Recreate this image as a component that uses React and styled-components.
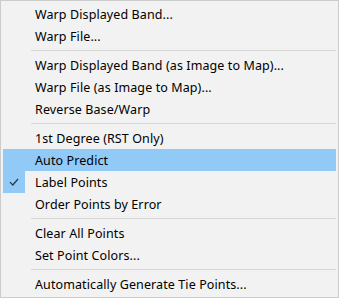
import React from "react";
import styled, { createGlobalStyle } from "styled-components";

const GlobalStyle = createGlobalStyle`
  html, body {
    margin: 0;
    padding: 0;
    background: #ffffff;
  }
  body {
    font-family: "Noto Sans", "Open Sans", sans-serif;
  }
`;

const items = [
  { label: "Warp Displayed Band..." },
  { label: "Warp File..." },
  { sep: true },
  { label: "Warp Displayed Band (as Image to Map)..." },
  { label: "Warp File (as Image to Map)..." },
  { label: "Reverse Base/Warp" },
  { sep: true },
  { label: "1st Degree (RST Only)" },
  { label: "Auto Predict", active: true },
  { label: "Label Points", checked: true },
  { label: "Order Points by Error" },
  { sep: true },
  { label: "Clear All Points" },
  { label: "Set Point Colors..." },
  { sep: true },
  { label: "Automatically Generate Tie Points..." },
];

const Check = () => (
  <svg width="10" height="8" viewBox="0 0 10 8">
    <path d="M1 4.2 L3.8 7 L9 1" fill="none" stroke="#333" strokeWidth="1.2" />
  </svg>
);

const App = () => (
  <>
    <GlobalStyle />
    <Menu>
      {items.map((it, i) =>
        it.sep ? (
          <Separator key={i} />
        ) : (
          <Item key={i} $active={it.active}>
            <Gutter $checked={it.checked}>{it.checked && <Check />}</Gutter>
            <Label>{it.label}</Label>
          </Item>
        )
      )}
    </Menu>
  </>
);

const Menu = styled.div`
  box-sizing: border-box;
  width: 339px;
  height: 298px;
  border: 1px solid #cccccc;
  background: #f2f2f2;
  padding: 2px;
  display: flex;
  flex-direction: column;
`;

const Item = styled.div`
  display: flex;
  align-items: center;
  height: 22px;
  background: ${(p) => (p.$active ? "#91c9f7" : "transparent")};
`;

const Gutter = styled.div`
  width: 22px;
  height: 22px;
  flex-shrink: 0;
  display: flex;
  align-items: center;
  justify-content: center;
  background: ${(p) => (p.$checked ? "#91c9f7" : "transparent")};
`;

const Label = styled.span`
  margin-left: 10px;
  font-size: 12.5px;
  letter-spacing: 0.1px;
  color: #000000;
  white-space: nowrap;
`;

const Separator = styled.div`
  height: 7px;
  display: flex;
  align-items: center;
  padding-left: 28px;

  &::after {
    content: "";
    flex: 1;
    height: 1px;
    background: #d7d7d7;
  }
`;

export default App;
